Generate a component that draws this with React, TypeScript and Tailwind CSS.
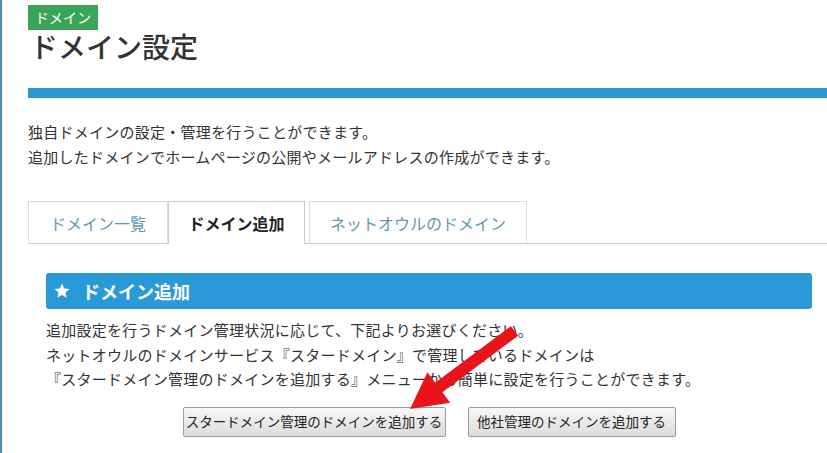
import React from "react";

export default function App() {
  return (
    <div className="relative w-[827px] h-[453px] overflow-hidden bg-white border-l-2 border-[#4f8db8] font-['Noto_Sans_CJK_JP',sans-serif] text-[#333] [text-spacing-trim:space-all]">
      <div className="pl-[26px] pt-[5px]">
        <div className="flex">
          <span className="bg-[#3ca35b] text-white text-[14px] leading-[25px] px-[7px]">ドメイン</span>
        </div>
        <h1 className="text-[28px] leading-[34px] -mt-[1px] pl-[2px] font-medium text-[#333]">ドメイン設定</h1>
        <div className="h-[10px] bg-[#2b96d3] mt-[25px]"></div>
        <div className="mt-[21px] text-[15px] leading-[25px] tracking-[0.25px]">
          <p>独自ドメインの設定・管理を行うことができます。</p>
          <p>追加したドメインでホームページの公開やメールアドレスの作成ができます。</p>
        </div>
        <div className="mt-[33px] flex items-end border-b border-[#ccc] h-[42px]">
          <div className="h-[42px] w-[140px] flex items-center justify-center border border-b-0 border-[#ddd] text-[16px] text-[#6497b1]">ドメイン一覧</div>
          <div className="h-[43px] -mb-px w-[137px] flex items-center justify-center border border-b-0 border-[#ccc] bg-white text-[16px] font-bold text-[#222]">ドメイン追加</div>
          <div className="ml-[4px] h-[42px] w-[218px] flex items-center justify-center border border-b-0 border-[#ddd] text-[16px] text-[#6497b1]">ネットオウルのドメイン</div>
        </div>
        <div className="pl-[18px] pr-[15px] pt-[29px]">
          <div className="h-[36px] bg-[#2a9ad6] rounded-[3px] flex items-center pl-[7px] text-white">
            <svg width="18" height="18" viewBox="0 0 24 24" className="mr-[11px]">
              <polygon fill="#fff" points="12,2 14.9,8.6 22,9.3 16.6,14 18.2,21 12,17.3 5.8,21 7.4,14 2,9.3 9.1,8.6" />
            </svg>
            <span className="text-[18px] font-bold">ドメイン追加</span>
          </div>
          <div className="mt-[9px] text-[15px] leading-[24.5px] tracking-[0.25px]">
            <p>追加設定を行うドメイン管理状況に応じて、下記よりお選びください。</p>
            <p>ネットオウルのドメインサービス『スタードメイン』で管理しているドメインは</p>
            <p>『スタードメイン管理のドメインを追加する』メニューから簡単に設定を行うことができます。</p>
          </div>
          <div className="mt-[15px] flex justify-center gap-[22px]">
            <button className="h-[30px] w-[263px] border border-[#9d9d9d] rounded-[2px] bg-gradient-to-b from-[#f7f7f7] to-[#dcdcdc] text-[13.5px] text-[#222]">スタードメイン管理のドメインを追加する</button>
            <button className="h-[30px] w-[208px] border border-[#9d9d9d] rounded-[2px] bg-gradient-to-b from-[#f7f7f7] to-[#dcdcdc] text-[13.5px] text-[#222]">他社管理のドメインを追加する</button>
          </div>
        </div>
      </div>
      <svg className="absolute left-[-2px] top-0 pointer-events-none" width="827" height="453" viewBox="0 0 827 453">
        <polygon fill="#e8141a" points="510.9,326.2 435.2,382.7 427.4,372.3 410,409 450.2,402.7 442.4,392.3 518.1,335.8" />
      </svg>
    </div>
  );
}
